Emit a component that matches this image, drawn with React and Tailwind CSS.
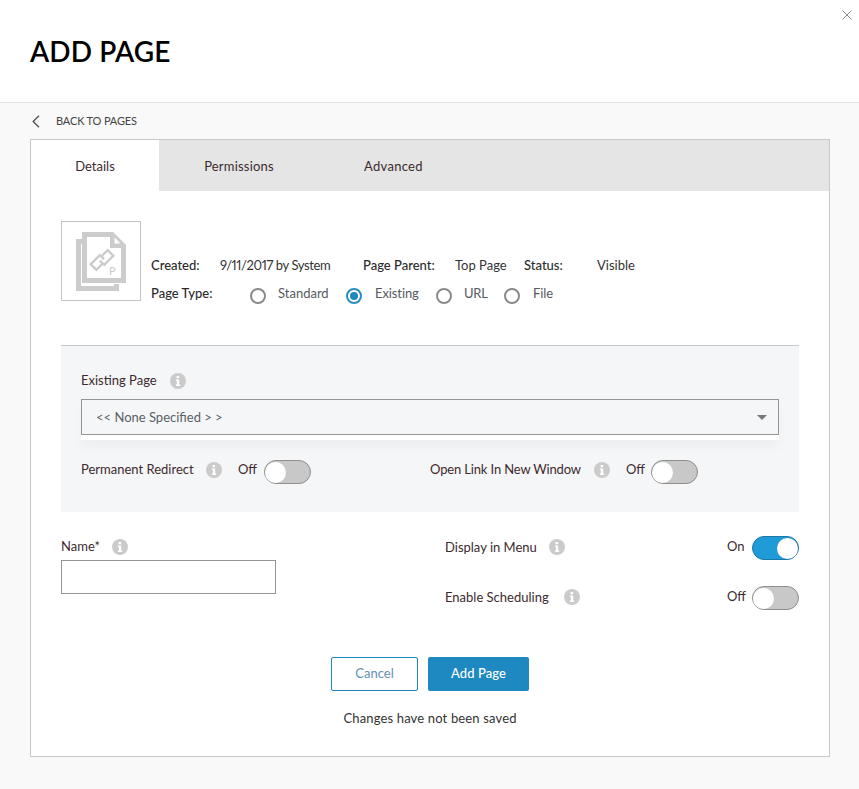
function Info({ className = "" }) {
  return (
    <svg width="16" height="16" viewBox="0 0 16 16" className={"shrink-0 " + className}>
      <circle cx="8" cy="8" r="8" fill="#cbcbcb" />
      <path d="M6.6 3.1h2.5v2.2H6.6zM5.9 6.4h3.3v5.1h1v1.5H5.9v-1.5h1V7.9h-1z" fill="#fff" />
    </svg>
  );
}

function Toggle({ on = false }) {
  return on ? (
    <div className="w-[47px] h-[24px] rounded-full bg-[#1f9bd7] border-[1.5px] border-[#1d75a8] flex items-center justify-end shrink-0">
      <div className="w-[21px] h-[21px] rounded-full bg-white" />
    </div>
  ) : (
    <div className="w-[47px] h-[24px] rounded-full bg-[#c8c8c8] border-[1.5px] border-[#8f8f8f] flex items-center justify-start shrink-0">
      <div className="w-[21px] h-[21px] rounded-full bg-white" />
    </div>
  );
}

function Radio({ on = false }) {
  return on ? (
    <div className="w-[16px] h-[16px] rounded-full border-2 border-[#2a8cc4] bg-white flex items-center justify-center shrink-0">
      <div className="w-[8px] h-[8px] rounded-full bg-[#1e88c0]" />
    </div>
  ) : (
    <div className="w-[16px] h-[16px] rounded-full border-2 border-[#8a8a8a] bg-white shrink-0" />
  );
}

export default function App() {
  return (
    <div className="w-[859px] h-[789px] overflow-hidden bg-[#f9f9f9] font-['Lato','Liberation_Sans',sans-serif] text-[13px] text-[#3d2a2e]">
      <header className="relative h-[103px] bg-white border-b border-[#e6e6e6] pl-[30px] pt-[34px]">
        <h1 className="text-[28px] leading-[34px] font-semibold tracking-[0.1px] text-black">ADD PAGE</h1>
        <svg className="absolute left-[842px] top-[10px]" width="10" height="10" viewBox="0 0 10 10">
          <path d="M0.5 0.5l9 9M9.5 0.5l-9 9" stroke="#8a8a8a" strokeWidth="1" fill="none" />
        </svg>
      </header>

      <div className="h-[36px] pl-[32px] flex items-center">
        <svg width="8" height="13" viewBox="0 0 8 13" className="shrink-0">
          <path d="M7 0.8L1.2 6.5L7 12.2" stroke="#555" strokeWidth="1.4" fill="none" />
        </svg>
        <span className="ml-[16px] text-[11px] tracking-[-0.15px] text-[#444]">BACK TO PAGES</span>
      </div>

      <main className="ml-[30px] w-[800px] h-[618px] bg-white border border-[#c8c8c8]">
        <nav className="h-[51px] bg-[#e4e5e4] flex">
          <div className="w-[128px] pt-[2px] bg-white flex items-center justify-center">Details</div>
          <div className="w-[160px] pt-[2px] flex items-center justify-center tracking-[0.2px]">Permissions</div>
          <div className="pl-[45px] pt-[2px] flex items-center tracking-[0.3px]">Advanced</div>
        </nav>

        <div className="px-[30px] pt-[30px]">
          <div className="flex">
            <div className="w-[80px] h-[80px] border border-[#c4c4c4] flex items-center justify-center shrink-0">
              <svg width="50" height="59" viewBox="0 0 50 59" className="mt-[1px]">
                <path d="M0 7h6v5H5v42h38v5H0z" fill="#cccccc" />
                <path d="M38 52h5v7h-5z" fill="#cccccc" />
                <path d="M6 0h31l13 13v38H6z" fill="#cccccc" />
                <path d="M11 5h23v11h11v30H11z" fill="#fff" />
                <path d="M38.5 5.5l6 6h-6z" fill="#fff" />
                <g transform="translate(26 28) rotate(-45)" fill="none" stroke="#cccccc" strokeWidth="2.4">
                  <path d="M-2-1V3H-11V-5H3" />
                  <path d="M2 1V-3H11V5H-3" />
                </g>
                <text x="33" y="43" fontSize="11" fill="#cccccc" fontFamily="Lato, sans-serif">P</text>
              </svg>
            </div>
            <div className="ml-[10px] pt-[36px]">
              <div className="flex h-[18px] items-center">
                <span className="w-[69px] font-medium text-[#2b2b2b]">Created:</span>
                <span className="w-[143px] proportional-nums tracking-[-0.4px] text-[#333]">9/11/2017 by System</span>
                <span className="w-[92px] font-medium text-[#2b2b2b]">Page Parent:</span>
                <span className="w-[69px] text-[#333]">Top Page</span>
                <span className="w-[73px] font-medium text-[#2b2b2b]">Status:</span>
                <span className="text-[#333]">Visible</span>
              </div>
              <div className="flex h-[18px] items-center mt-[10px] text-[#555a60]">
                <span className="w-[99px] font-medium text-[#2b2b2b]">Page Type:</span>
                <div className="mt-[3px]"><Radio /></div>
                <span className="ml-[12px] w-[68px]">Standard</span>
                <div className="mt-[3px]"><Radio on /></div>
                <span className="ml-[13px] w-[61px] tracking-[-0.1px]">Existing</span>
                <div className="mt-[3px]"><Radio /></div>
                <span className="ml-[12px] w-[40px] tracking-[-0.2px]">URL</span>
                <div className="mt-[3px]"><Radio /></div>
                <span className="ml-[13px] tracking-[-0.1px]">File</span>
              </div>
            </div>
          </div>

          <section className="mt-[42px] h-[167px] bg-[#f5f6f8] border-t border-[#c8c8c8] px-[20px] pt-[26px]">
            <div className="flex items-center gap-[13px] h-[18px]">
              <span>Existing Page</span>
              <Info />
            </div>
            <div className="mt-[9px] h-[41px] bg-white shadow-[0_8px_10px_rgba(0,0,0,0.03)]">
              <div className="h-[36px] bg-[#f5f6f8] border border-[#949494] pl-[14px] pr-[11px] pt-[1px] flex items-center justify-between text-[#5a5f66]">
                <span>&lt;&lt; None Specified &gt; &gt;</span>
                <span className="w-0 h-0 border-x-[5px] border-x-transparent border-t-[5px] border-t-[#777]" />
              </div>
            </div>
            <div className="flex mt-[20px] h-[24px] items-center">
              <div className="w-[349px] flex items-center">
                <span className="w-[125px] mb-[4px]">Permanent Redirect</span>
                <Info className="mb-[4px]" />
                <span className="ml-[16px] w-[26px] mb-[4px]">Off</span>
                <Toggle />
              </div>
              <div className="flex items-center">
                <span className="w-[164px] mb-[4px] tracking-[-0.15px]">Open Link In New Window</span>
                <Info className="mb-[4px]" />
                <span className="ml-[16px] w-[25px] mb-[4px]">Off</span>
                <Toggle />
              </div>
            </div>
          </section>

          <div className="flex mt-[26px]">
            <div className="w-[384px]">
              <div className="flex items-center h-[18px]">
                <span className="w-[51px]">Name*</span>
                <Info />
              </div>
              <input className="block mt-[4px] w-[215px] h-[34px] bg-white border border-[#949494]" />
            </div>
            <div className="flex-1 -mt-[2px]">
              <div className="flex items-center h-[24px]">
                <span className="w-[104px]">Display in Menu</span>
                <Info className="mb-[2px]" />
                <span className="ml-auto w-[25px] mb-[2px]">On</span>
                <Toggle on />
              </div>
              <div className="flex items-center h-[24px] mt-[26px]">
                <span className="w-[119px]">Enable Scheduling</span>
                <Info className="mb-[2px]" />
                <span className="ml-auto w-[25px] mb-[2px]">Off</span>
                <Toggle />
              </div>
            </div>
          </div>

          <div className="flex justify-center gap-[10px] mt-[47px]">
            <button className="w-[87px] h-[34px] rounded-[2px] border border-[#1e88c0] bg-white text-[#5f8fb0]">Cancel</button>
            <button className="w-[101px] h-[34px] rounded-[2px] bg-[#1e88c0] text-white font-medium tracking-[0.1px]">Add Page</button>
          </div>
          <p className="mt-[18px] text-center leading-[18px] tracking-[0.15px] text-[#333]">Changes have not been saved</p>
        </div>
      </main>
    </div>
  );
}
